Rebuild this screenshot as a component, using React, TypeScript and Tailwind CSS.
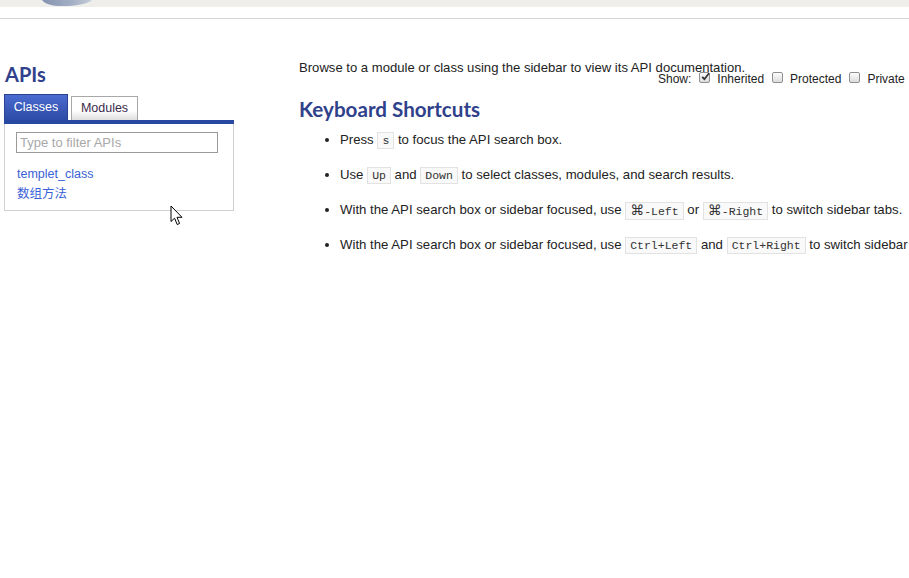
import React from "react";

function Code({ children }: { children: React.ReactNode }) {
  return (
    <code
      className="inline-block border border-[#e2e2e2] bg-[#f9f9f9] px-[4px] leading-[15px] text-[11.5px] text-[#333] align-middle"
      style={{ fontFamily: '"Liberation Mono", "DejaVu Sans Mono", monospace' }}
    >
      {children}
    </code>
  );
}

function Cmd() {
  return (
    <span className="text-[14px] leading-[15px]" style={{ fontFamily: '"DejaVu Sans", sans-serif' }}>
      ⌘
    </span>
  );
}

function Box({ checked }: { checked?: boolean }) {
  return (
    <span className="relative inline-flex h-[11px] w-[11px] items-center justify-center rounded-[2px] border border-[#8f8f8f] bg-gradient-to-b from-[#fdfdfd] to-[#dcdcdc]">
      {checked && (
        <svg width="9" height="9" viewBox="0 0 9 9" className="absolute left-[1px] top-[-1px]">
          <path d="M1.2 4.8 L3.4 7.2 L8 1.2" fill="none" stroke="#333" strokeWidth="1.8" />
        </svg>
      )}
    </span>
  );
}

export default function App() {
  const sans = { fontFamily: '"Liberation Sans", Arial, "Noto Sans CJK SC", sans-serif' };
  const head = { fontFamily: 'Lato, "Open Sans", sans-serif' };
  return (
    <div className="relative h-[578px] w-[909px] overflow-hidden bg-white text-[#222]" style={sans}>
      {/* top strip */}
      <div className="h-[7px] bg-[#efeeeb] pl-[42px]">
        <svg width="52" height="7" viewBox="0 0 52 7" className="block">
          <defs>
            <linearGradient id="lg" x1="0" x2="1" y1="0" y2="0">
              <stop offset="0" stopColor="#8593b0" />
              <stop offset="0.6" stopColor="#a3afc4" />
              <stop offset="1" stopColor="#c5ccd8" />
            </linearGradient>
          </defs>
          <path d="M0 0 H50 C45 4 34 6 20 6 C10 6 3 4 0 0 Z" fill="url(#lg)" />
        </svg>
      </div>
      <div className="mt-[11px] h-px bg-[#d6d6d6]" />

      <div className="flex">
        {/* sidebar */}
        <div className="ml-[4px] w-[230px] shrink-0">
          <h2 className="mt-[43px] pl-[1px] text-[20px] font-bold leading-[24px] text-[#30418c]" style={head}>
            APIs
          </h2>
          <div className="mt-[8px] flex items-end gap-[3px]">
            <div className="flex h-[26px] w-[64px] items-center justify-center border border-b-0 border-[#2a4494] bg-gradient-to-b from-[#4a6bd0] to-[#2d4ba6] text-[12.5px] text-white">
              Classes
            </div>
            <div className="flex h-[24px] w-[67px] items-center justify-center border border-b-0 border-[#a8a8a8] bg-gradient-to-b from-white from-60% to-[#dedede] text-[12.5px] text-[#3a2a4a]">
              Modules
            </div>
          </div>
          <div className="h-[4px] bg-[#2748a3]" />
          <div className="h-[87px] border border-t-0 border-[#d0d0d0] bg-white pl-[11px] pt-[8px]">
            <div className="flex h-[21px] w-[202px] items-center border border-[#9a9a9a] bg-white pl-[3px] text-[13px] text-[#a8a8a8]">
              Type to filter APIs
            </div>
            <div className="mt-[11px] pl-[1px] text-[12.5px] leading-[20px] text-[#3a5fd6]">
              <div>templet_class</div>
              <div>数组方法</div>
            </div>
          </div>
        </div>

        {/* content */}
        <div className="ml-[65px] w-[700px] shrink-0">
          <p className="mt-[42px] text-[13.1px] leading-[14px]">
            Browse to a module or class using the sidebar to view its API documentation.
          </p>
          <div className="-mt-[3px] ml-[359px] flex items-center whitespace-nowrap text-[12px] leading-[14px] text-[#222]">
            <span>Show:</span>
            <span className="ml-[8px]"><Box checked /></span>
            <span className="ml-[7px]">Inherited</span>
            <span className="ml-[8px]"><Box /></span>
            <span className="ml-[7px]">Protected</span>
            <span className="ml-[8px]"><Box /></span>
            <span className="ml-[7px]">Private</span>
          </div>
          <h2 className="mt-[10px] text-[20.6px] font-bold leading-[26px] text-[#30418c]" style={head}>
            Keyboard Shortcuts
          </h2>
          <ul className="ml-[41px] mt-[9px] list-disc whitespace-nowrap text-[13.2px] leading-[18px]">
            <li className="mb-[17px] h-[18px]">
              Press <Code>s</Code> to focus the API search box.
            </li>
            <li className="mb-[17px] h-[18px]">
              Use <Code>Up</Code> and <Code>Down</Code> to select classes, modules, and search results.
            </li>
            <li className="mb-[17px] h-[18px]">
              With the API search box or sidebar focused, use <Code><Cmd />-Left</Code> or <Code><Cmd />-Right</Code> to switch sidebar tabs.
            </li>
            <li className="h-[18px]">
              With the API search box or sidebar focused, use <Code>Ctrl+Left</Code> and <Code>Ctrl+Right</Code> to switch sidebar tabs.
            </li>
          </ul>
        </div>
      </div>

      {/* mouse cursor */}
      <svg width="14" height="22" viewBox="0 0 14 22" className="absolute left-[170px] top-[205px]">
        <path d="M1 1 L1 16.5 L4.6 13.2 L7.2 19.5 L9.6 18.5 L7 12.3 L12 12.3 Z" fill="white" stroke="black" strokeWidth="1" strokeLinejoin="round" />
      </svg>
    </div>
  );
}
